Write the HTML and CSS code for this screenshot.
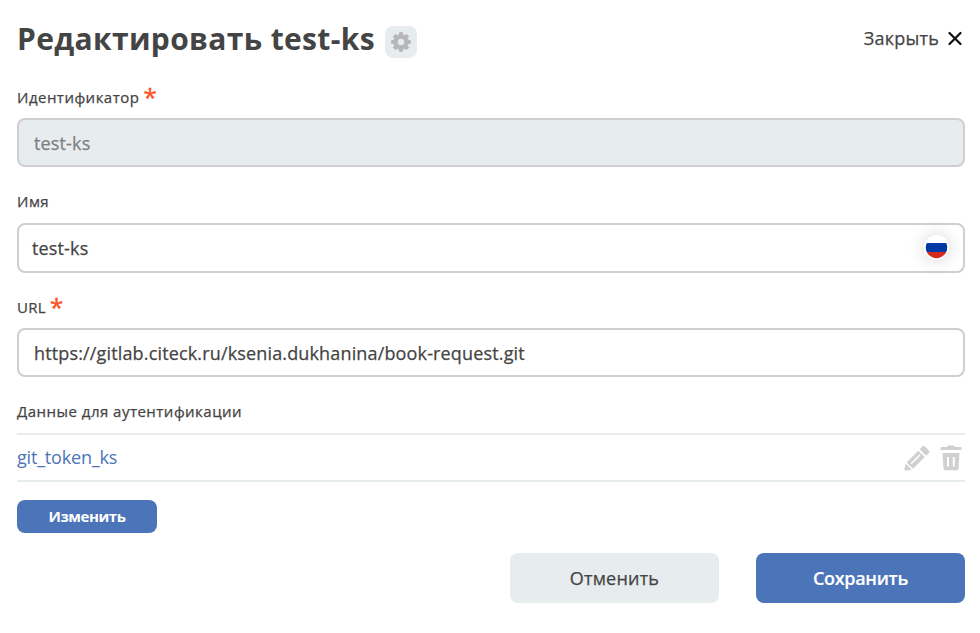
FILE: index.html
```html
<!DOCTYPE html>
<html lang="ru">
<head>
<meta charset="utf-8">
<title>Редактировать test-ks</title>
<link rel="stylesheet" href="styles.css">
</head>
<body>
<main class="dialog">
  <header class="header">
    <h1 class="title">Редактировать test-ks</h1>
    <button class="settings" aria-label="Настройки">
      <svg width="20" height="20" viewBox="0 0 20 20"><path fill="#b7b7b7" stroke="#b7b7b7" stroke-linejoin="round" fill-rule="evenodd" d="M8.700.6h2.600l.6 2.500 1.500.6 2.200-1.300 2 2-1.300 2.200.6 1.500 2.500.6v2.600l-2.500.6-.6 1.500 1.300 2.200-2 2-2.200-1.300-1.500.6-.6 2.500H8.700l-.6-2.500-1.500-.6-2.200 1.300-2-2 1.300-2.200-.6-1.500-2.500-.6V8.700l2.500-.6.6-1.500-1.300-2.200 2-2 2.200 1.300 1.500-.6zM10 6.200a3.800 3.800 0 1 0 0 7.600 3.800 3.800 0 0 0 0-7.600z"/></svg>
    </button>
    <button class="close"><span>Закрыть</span>
      <svg width="14" height="14" viewBox="0 0 14 14"><path d="M1.500 2l11 11m0-11l-11 11" stroke="#111" stroke-width="2.200" stroke-linecap="round"/></svg>
    </button>
  </header>

  <section class="field">
    <div class="label">Идентификатор<span class="required">*</span></div>
    <div class="input disabled">test-ks</div>
  </section>
  <section class="field">
    <div class="label raised">Имя</div>
    <div class="input localized"><span>test-ks</span>
      <svg class="flag" width="25" height="25" viewBox="0 0 25 25"><defs><clipPath id="disc"><circle cx="12.500" cy="12.500" r="10.700"/></clipPath></defs><circle cx="12.500" cy="12.500" r="12.500" fill="#fff"/><g clip-path="url(#disc)"><path fill="#0039a6" d="M0 8h25v9H0z"/><path fill="#d52b1e" d="M0 17h25v8H0z"/></g></svg>
    </div>
  </section>
  <section class="field">
    <div class="label latin">URL<span class="required">*</span></div>
    <div class="input">https://gitlab.citeck.ru/ksenia.dukhanina/book-request.git</div>
  </section>
  <section class="credentials">
    <div class="label raised auth">Данные для аутентификации</div>
    <div class="token-row">
      <a class="token">git_token_ks</a>
      <svg class="pencil" width="26" height="26" viewBox="0 0 26 26" fill="#d0d0d0"><path d="M18.500 1.500q1.200-1.200 2.400 0l4 4q1.200 1.200 0 2.400l-2.800 2.800-6.400-6.400z"/><path fill-rule="evenodd" d="M14.300 5.700l6.400 6.400L9 23.800 2.600 17.400zM15.400 9.300L6.500 18.200l1.100 1.100 8.900-8.900z"/><path d="M1.500 18.500l6.300 6.300-6.200.9q-1.400 0-1.200-1.400z"/></svg>
      <svg class="trash" width="22" height="26" viewBox="0 0 22 26" fill="#d0d0d0"><path d="M1.500 2H7L8 .5h6L15 2h5.500q1 0 1 1v2H.500V3q0-1 1-1z"/><path fill-rule="evenodd" d="M2.500 8h17l-1 15.500q-.1 1.700-1.800 1.700H5.300q-1.700 0-1.800-1.700zM7 12v9.500h2V12zm5.800 0v9.500h2V12z"/></svg>
    </div>
    <button class="button change">Изменить</button>
  </section>
  <footer class="actions">
    <button class="button cancel">Отменить</button>
    <button class="button save">Сохранить</button>
  </footer>
</main>
</body>
</html>
```
FILE: styles.css
```css
* { box-sizing: border-box; }
body { margin: 0; background: #fff; color: #444; font: 500 18px/24px "Open Sans", sans-serif; }
button { border: 0; padding: 0; background: none; color: inherit; font: inherit; }
svg { display: block; flex: none; }
.dialog { width: 980px; padding: 24px 15px 0 17px; }
.header { display: flex; align-items: flex-start; height: 62px; }
.title { margin: -4px 0 0; font-size: 30px; line-height: 38px; font-weight: 700; letter-spacing: .35px; white-space: nowrap; }
.settings { display: grid; place-items: center; width: 32px; height: 32px; margin: 2px 0 0 10px; border-radius: 8px; background: #e7ecee; }
.close { display: flex; align-items: center; gap: 9px; margin: 2px 3px 0 auto; letter-spacing: .22px; }
.close, .label, .input, .cancel { -webkit-text-stroke: .25px currentColor; }
.field { height: 105px; }
.label { display: flex; height: 32px; font-size: 15px; line-height: 22px; letter-spacing: .48px; }
.latin { letter-spacing: .3px; }
.raised { line-height: 20px; }
.required { margin-left: 4px; color: #fc5327; font-size: 24px; letter-spacing: 0; -webkit-text-stroke-width: .5px; }
.input { display: flex; align-items: center; height: 49px; padding: 0 15px; border: 2px solid #cfcfcf; border-radius: 8px; white-space: nowrap; letter-spacing: .15px; }
.disabled { background: #e7ecef; color: #808080; }
.localized { height: 50px; justify-content: space-between; padding: 0 14px 0 13px; }
.flag { margin-bottom: 1px; border-radius: 50%; box-shadow: 0 0 16px rgba(0, 0, 0, .18); }
.token-row { display: flex; align-items: center; height: 49px; border: solid #e7ecef; border-width: 2px 0; padding-right: 3px; }
.token { margin: -1px auto 0 0; color: #4b75b8; font-weight: 400; letter-spacing: -.19px; }
.pencil { margin-right: 10px; }
.trash { margin-top: 1px; }
.button { display: grid; place-items: center; border-radius: 8px; }
.change { width: 140px; height: 33px; margin-top: 18px; padding-bottom: 2px; background: #4b75b8; color: #fff; font-size: 15px; font-weight: 700; letter-spacing: -.43px; }
.actions { display: flex; justify-content: flex-end; gap: 37px; margin-top: 20px; }
.cancel, .save { width: 209px; height: 50px; }
.cancel { background: #e7ecef; letter-spacing: .2px; }
.save { background: #4b75b8; color: #fff; font-weight: 600; letter-spacing: -.3px; -webkit-text-stroke: .15px currentColor; }
```
